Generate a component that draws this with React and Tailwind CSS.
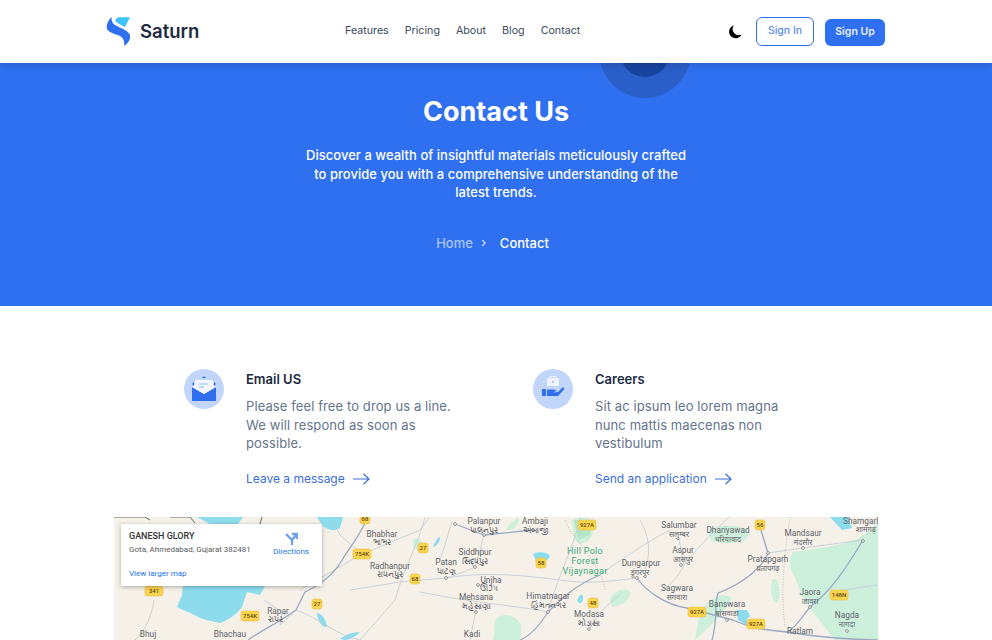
const font = { fontFamily: "Inter, sans-serif" };
const labels = [
[484,522,"Palanpur"],[484,531,"પાલનપુર"],[535,522,"Ambaji"],[535,531,"અંબાજી"],[382,535,"Bhabhar"],[382,543,"ભાભર"],[390,567,"Radhanpur"],[390,575,"રાધનપુર"],
[475,553,"Siddhpur"],[475,562,"સિદ્ધપુર"],[446,563,"Patan"],[446,572,"પાટણ"],[491,581,"Unjha"],[489,589,"ઊંઝા"],[476,598,"Mehsana"],[476,607,"મહેસાણા"],
[548,597,"Himatnagar"],[548,606,"હિંમતનગર"],[589,615,"Modasa"],[589,624,"મોડાસા"],[472,635,"Kadi"],[679,526,"Salumbar"],[679,535,"सलुम्बर"],[728,531,"Dhariyawad"],[728,540,"धरियावाद"],
[803,534,"Mandsaur"],[803,543,"मंदसौर"],[862,522,"Shamgarh"],[866,530,"शामगढ़"],[683,551,"Aspur"],[683,560,"आसपुर"],[768,560,"Pratapgarh"],[768,569,"प्रतापगढ़"],[641,564,"Dungarpur"],[640,573,"डूंगरपुर"],
[677,589,"Sagwara"],[677,598,"सगवारा"],[727,605,"Banswara"],[727,614,"बांसवाड़ा"],[810,593,"Jaora"],[810,602,"जावरा"],[847,616,"Nagda"],[847,625,"नागदा"],[800,632,"Ratlam"],
[278,612,"Rapar"],[275,620,"રાપર"],[230,635,"Bhachau"],[148,635,"Bhuj"]];
const shields = [[365,519,"68"],[362,554,"754K"],[154,591,"341"],[250,616,"754K"],[317,604,"27"],[423,548,"27"],[415,579,"68"],[541,563,"58"],[587,525,"927A"],[593,603,"48"],[760,525,"56"],[839,595,"148N"],[697,612,"927A"],[756,624,"927A"]];
const major = ["M368 517C360 535 352 545 345 555C335 575 320 585 305 592L296 610C275 625 262 630 248 640","M760 527L768 553C764 565 745 583 718 593C714 603 718 620 712 640","M863 540C845 570 830 592 810 607C800 620 795 628 787 632","M637 578C645 590 665 605 687 608L733 620C750 628 765 630 787 632C810 636 850 640 878 640","M548 612C560 600 575 585 600 575","M548 612C540 625 532 635 520 640","M455 524L484 535L533 530"];
const roads = ["M362 554L340 535L330 517","M300 590L360 555L420 530L430 517","M154 600C152 615 146 630 135 640","M264 600L282 612L280 625L296 610","M296 610C320 618 335 635 360 640","M484 535C480 550 478 560 475 567C465 572 455 575 446 578L400 582L350 590","M446 578C470 574 500 572 560 580C590 585 620 580 637 578","M768 553L803 548L863 540","M476 610L470 640","M548 612C520 606 480 604 420 592","M591 628C596 618 605 605 620 595","M679 540L684 565C680 575 670 585 660 592","M640 520C648 535 652 550 645 570","M830 592C850 590 865 586 878 585","M425 517C420 540 405 565 395 600L360 640","M452 521C448 535 444 548 440 560","M580 517C575 545 560 570 548 612","M729 517C715 530 700 545 684 565","M600 575C620 560 650 540 670 530"];
const green = ["M572 520C580 516 595 516 593 525C595 535 588 546 578 543C572 538 574 530 572 520Z","M707 530C720 524 742 524 750 532C748 542 730 546 712 541Z","M793 552C820 548 850 545 863 535C878 525 878 520 878 520V640H835C820 620 805 605 800 590C795 575 785 565 793 552Z","M497 618C505 612 515 615 521 625C522 632 520 640 520 640H493C496 632 492 625 497 618Z","M506 530C508 524 514 520 519 518C518 526 514 531 506 530Z","M610 598C616 590 626 587 630 592C630 600 622 606 612 607Z","M413 540C418 536 423 540 423 548C420 554 414 552 413 540Z","M700 612C708 600 722 590 732 598C725 612 705 632 695 640Z","M772 580C778 575 782 590 778 602C772 605 770 590 772 580Z"];
const water = ["M183 586H265L260 595L247 592L242 607C236 615 228 620 220 623C212 621 205 620 200 618C190 612 182 610 177 607L182 595Z","M197 517H243L238 524H210Z","M317 517H343L340 528C333 532 328 530 322 525Z","M533 554C538 551 548 552 550 556C548 562 540 562 536 561Z","M317 613C322 614 326 619 327 627C322 628 318 622 317 613Z","M340 639C345 635 352 632 360 632C357 636 350 640 345 640Z","M433 547C435 542 437 538 440 537C440 542 437 546 433 547Z","M737 610L747 610L750 616L746 620L763 625L748 626L738 620Z","M830 517H848L852 528L842 530Z","M577 600C580 595 582 592 583 597C583 603 580 606 577 600Z"];
const dots = [[455,524],[484,535],[475,567],[446,578],[478,585],[476,612],[548,612],[589,629],[637,578],[681,565],[768,553],[803,548],[863,541],[810,607],[847,631],[727,620]];
function MapView(){return(
<svg viewBox="114 517 764 123" className="block h-full w-full" style={{fontFamily:"Roboto, sans-serif"}}>
<rect x="114" y="517" width="764" height="123" fill="#f5f1e8"/>
{green.map((d,i)=><path key={i} d={d} fill="#cdf0dc"/>)}
<path d="M574 520H592L590 535L578 540Z" fill="#b4e6c6"/>
{water.map((d,i)=><path key={i} d={d} fill="#8ddcee"/>)}
<path d="M114 517H145L150 520M170 517H190L195 523M262 517L260 524" fill="none" stroke="#444" strokeWidth="0.8"/>
{roads.map((d,i)=><path key={i} d={d} fill="none" stroke="#c3c9d2" strokeWidth="0.8"/>)}
{major.map((d,i)=><path key={i} d={d} fill="none" stroke="#9aa9c2" strokeWidth="1.3" strokeLinejoin="round"/>)}
<path d="M565 520C572 540 600 560 605 590M790 517C785 550 780 590 785 625" fill="none" stroke="#9a9a9a" strokeWidth="0.6" strokeDasharray="1 1.5"/>
{dots.map(([x,y],i)=><circle key={i} cx={x} cy={y} r="1.4" fill="#fff" stroke="#555" strokeWidth="0.6"/>)}
{labels.map(([x,y,t],i)=><text key={i} x={x} y={y} textAnchor="middle" fontSize={/[A-Za-z]/.test(t)?8.3:7.5} fill="#5f6368" dominantBaseline="middle" style={{fontFamily:"Roboto, 'Noto Sans', 'DejaVu Sans', sans-serif"}}>{t}</text>)}
<g fill="#3aa981" fontSize="9" textAnchor="middle" letterSpacing="0.3"><text x="585" y="554">Hill Polo</text><text x="585" y="564">Forest</text><text x="585" y="574">Vijaynagar</text></g>
{shields.map(([x,y,t],i)=>{const w=t.length>2?18:10;return(<g key={i}><rect x={x-w/2} y={y-5} width={w} height="10" rx="2.5" fill="#fbd44f" stroke="#e8c04a" strokeWidth="0.6"/><text x={x} y={y+2.2} textAnchor="middle" fontSize="6" fill="#5c4a12" fontWeight="500">{t}</text></g>)})}
</svg>)}
function Logo(){return(<svg viewBox="0 0 24 30" className="h-[30px] w-6"><path d="M6 0C2 3 0 8 1 12C3 16 10 17 14 19C17 21 19 24 18 29C22 27 25 22 24 18C22 13 14 11 9 8C6 6 5 3 6 0Z" fill="#2F6FED"/><path d="M12 .3H24L19 10C15 8 11 6 9 3.7C10 2 11 .5 12 .3Z" fill="#3fc1fb"/></svg>)}
function Hero(){return(<section className="relative flex h-[243px] shrink-0 flex-col items-center overflow-hidden bg-[#2F70F0] text-white">
<div className="absolute left-[599px] top-[-57px] flex h-[92px] w-[92px] items-center justify-center rounded-full bg-[#2a5fc9]"><div className="h-[50px] w-[50px] rounded-full bg-[#17449f]"/></div>
<h1 className="relative mt-[32px] text-[27px] font-bold leading-[34px]">Contact Us</h1>
<p className="mt-[17px] w-[390px] text-center text-[13px] font-medium leading-[18.6px] tracking-[0.03px]">Discover a wealth of insightful materials meticulously crafted to provide you with a comprehensive understanding of the latest trends.</p>
<div className="mt-[31px] flex items-center pr-[7px] text-[13px] font-medium leading-5"><span className="text-[#a9c5f8]">Home</span><svg viewBox="0 0 8 10" className="ml-2 mr-[13px] h-[10px] w-[6px]"><path d="M1.5 1L5.5 5L1.5 9" fill="none" stroke="white" strokeWidth="1.4"/></svg><span>Contact</span></div>
</section>)}
function Arrow(){return(<svg viewBox="0 0 17 12" className="h-3 w-[17px]"><path d="M0 6H16M10.5 .8L16 6L10.5 11.2" fill="none" stroke="#3a6fd8" strokeWidth="1.2"/></svg>)}
function Item({icon,title,lines,link,className}){return(<div className={"flex "+className}>
<div className="mr-[22px] flex h-10 w-10 shrink-0 items-center justify-center rounded-full bg-[#c2d6fc]">{icon}</div>
<div><h3 className="text-[13px] font-semibold leading-5 text-[#1d2a3f]">{title}</h3><p className="mt-[8px] text-[13px] leading-[18.67px] tracking-[0.1px] text-[#64748b]">{lines.map(l=><span className="block" key={l}>{l}</span>)}</p><a className="mt-[18px] flex items-center gap-2 text-xs leading-4 text-[#3a6fd8]">{link}<Arrow/></a></div></div>)}
const Mail=<svg viewBox="0 0 40 40" className="h-10 w-10"><path d="M20 7L22 9H18Z" fill="#2F6FED"/><path d="M8 15L10 13V17ZM32 15L30 13V17Z" fill="#2F6FED"/><path d="M8 18L20 25L32 18V32H8Z" fill="#2F6FED"/><path d="M8 18L11 16V11H29V16L32 18L20 25Z" fill="#f2f6fe"/><path d="M15 15H24M15 18H20" stroke="#b4cdf9" strokeWidth="1.3"/></svg>;
const Hand=<svg viewBox="0 0 40 40" className="h-10 w-10"><path d="M17 9V7.5H23V9" fill="none" stroke="#eef3fe" strokeWidth="1.2"/><rect x="14" y="9" width="12" height="8" rx="1.5" fill="#eef3fe"/><rect x="19" y="12" width="2" height="2" fill="#b4cdf9"/><rect x="9" y="20" width="4" height="7" fill="#2F6FED"/><path d="M14 20.5H21L24 22L19 23.5L25 23L30 18L31.5 20L25 27H14Z" fill="#2F6FED"/></svg>;
export default function App(){return(<div className="flex h-[640px] flex-col overflow-hidden bg-white" style={font}>
<header className="relative z-10 flex h-[63px] shrink-0 items-center bg-white pl-[106px] pr-[107px] shadow-[0_2px_8px_rgba(0,0,0,0.15)]">
<div className="flex w-[239px] items-center gap-[10px]"><Logo/><span className="text-[18.5px] font-semibold text-[#1d2a3f]">Saturn</span></div>
<nav className="flex gap-[16px] text-[10.7px] font-normal text-[#3c4a5d]"><a>Features</a><a>Pricing</a><a>About</a><a>Blog</a><a>Contact</a></nav>
<div className="ml-auto flex items-center"><svg viewBox="0 0 14 14" className="mr-[14px] h-[14px] w-[14px]"><path d="M6 0.5A6.5 6.5 0 1 0 13.5 9.5A6 6 0 0 1 6 0.5Z" fill="black"/></svg>
<a className="mb-[1px] flex h-[29px] w-[58px] items-center justify-center rounded-md border border-[#2F6FED] text-[10.5px] font-medium text-[#5f8ee8]">Sign In</a>
<a className="ml-[11px] mt-[1px] flex h-[27px] w-[60px] items-center justify-center rounded-md bg-[#2F70F0] text-[10.5px] font-semibold text-[#e6eefd]">Sign Up</a></div>
</header>
<Hero/>
<section className="flex pl-[184px] pt-[63px]"><Item className="w-[349px]" icon={Mail} title="Email US" lines={["Please feel free to drop us a line.","We will respond as soon as","possible."]} link="Leave a message"/><Item icon={Hand} title="Careers" lines={["Sit ac ipsum leo lorem magna","nunc mattis maecenas non","vestibulum"]} link="Send an application"/></section>
<section className="relative mx-[114px] mt-[30px] h-[123px] shrink-0 overflow-hidden"><MapView/>
<div className="absolute left-[7px] top-[7px] h-[62px] w-[201px] bg-white shadow-[0_1px_4px_rgba(0,0,0,0.3)]" style={{fontFamily:"Roboto, sans-serif"}}>
<div className="absolute left-2 top-[6px] text-[9px] font-medium leading-3 text-[#333]">GANESH GLORY</div>
<div className="absolute left-2 top-[20px] text-[8px] leading-3 text-[#5b5b5b]">Gota, Ahmedabad, Gujarat 382481</div>
<div className="absolute left-2 top-[44px] text-[8px] leading-3 text-[#1a73e8]">View larger map</div>
<div className="absolute left-[150px] top-[8px] flex w-[40px] flex-col items-center text-[8px] leading-3 text-[#1a73e8]"><svg viewBox="0 0 14 14" className="h-[14px] w-[14px]"><path d="M8 13V8L2 2M8 8L12 3M8 2H13V7" fill="none" stroke="#6ea3e8" strokeWidth="2.4"/></svg><span>Directions</span></div>
</div></section>
</div>)}
